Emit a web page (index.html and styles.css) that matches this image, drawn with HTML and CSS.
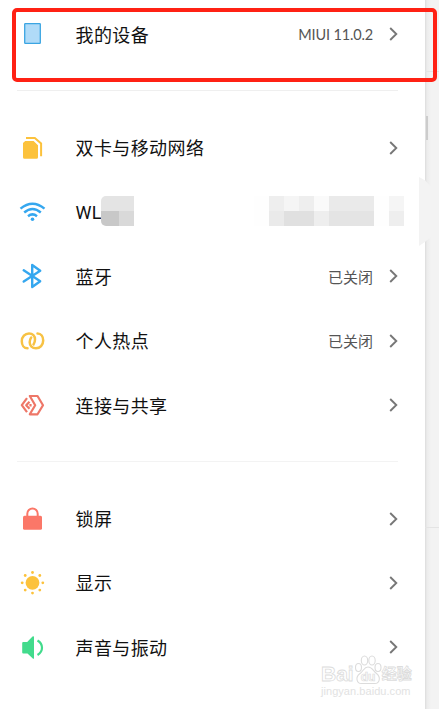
FILE: index.html
```
<!DOCTYPE html>
<html lang="zh-CN">
<head>
    <meta charset="UTF-8">
    <title>设置</title>
    <link rel="stylesheet" href="styles.css">
</head>

<body>

    <div class="screen">

        <div class="group">
            <div class="row">
                <svg class="icon" viewBox="0 0 30 30"><rect x="7.7" y="4.7" width="15.6" height="19.6" rx="0.6" fill="#b0dbf8" stroke="#3ba5e2" stroke-width="1.3"/></svg>
                <span class="label">我的设备</span>
                <span class="value version">MIUI 11.0.2</span>
                <svg class="arrow" viewBox="0 0 9 14"><path d="M1.2 1 7.3 7 1.2 13"/></svg>
            </div>
        </div>

        <div class="group">
            <div class="row">
                <svg class="icon" viewBox="0 0 30 30">
                    <path d="M8.2 8H16.6L21 12.200V24.200a1.500 1.500 0 0 1-1.500 1.500H7.500A1.500 1.500 0 0 1 6 24.200V10Z" fill="#fcc23c"/>
                    <path d="M9 4.900h8.800l6.300 5.500v12.800" fill="none" stroke="#fcc23c" stroke-width="2"/>
                </svg>
                <span class="label">双卡与移动网络</span>
                <svg class="arrow" viewBox="0 0 9 14"><path d="M1.2 1 7.3 7 1.2 13"/></svg>
            </div>
            <div class="row">
                <svg class="icon" viewBox="0 0 30 30" fill="none" stroke="#35a7ef" stroke-width="2.500">
                    <path d="M3.500 11.600Q15.500 1.800 27.500 11.600"/>
                    <path d="M7.200 15.500Q15.500 8.600 23.800 15.500"/>
                    <path d="M11 19.200Q15.500 15.600 20 19.200"/>
                    <circle cx="15.500" cy="22.300" r="1.800" fill="#35a7ef" stroke="none"/>
                </svg>
                <span class="label">WL</span>
                <div class="mosaic mosaic-name"><i class="c4"></i><i class="c4"></i><i class="c7"></i><i class="c6"></i></div>
                <div class="mosaic mosaic-value">
                    <i class="cw"></i><i class="c2"></i><i class="c1"></i><i class="c2"></i><i class="c0"></i><i class="c3"></i><i class="c3"></i><i class="c3"></i><i class="cw"></i><i class="c1"></i>
                    <i class="cw"></i><i class="c3"></i><i class="c5"></i><i class="c5"></i><i class="c2"></i><i class="c4"></i><i class="c4"></i><i class="c4"></i><i class="cw"></i><i class="c2"></i>
                </div>
            </div>
            <div class="row">
                <svg class="icon" viewBox="0 0 30 30"><path d="M6.700 9.300 23.200 20.200 15.200 26V4L23.200 9.700 6.700 20.500" fill="none" stroke="#35a7ef" stroke-width="2.400" stroke-linejoin="round" stroke-linecap="round"/></svg>
                <span class="label">蓝牙</span>
                <span class="value">已关闭</span>
                <svg class="arrow" viewBox="0 0 9 14"><path d="M1.2 1 7.3 7 1.2 13"/></svg>
            </div>
            <div class="row">
                <svg class="icon" viewBox="0 0 30 30" fill="none" stroke="#f7c244" stroke-width="2.500" stroke-linecap="round">
                    <path d="M10.500 22.300C7 22.300 4.800 19 4.800 15.200C4.800 10.800 8 7.500 12 7.500C15.800 7.500 18 10 18 13.500C18 15.500 17.500 17 16.500 18.500"/>
                    <path d="M20.500 7.500C24 7.500 26.200 10.800 26.200 14.600C26.200 19 23 22.300 19 22.300C15.200 22.300 12.700 19.800 12.700 16.300C12.700 14.300 13.300 12.800 14.200 11.600"/>
                </svg>
                <span class="label">个人热点</span>
                <span class="value">已关闭</span>
                <svg class="arrow" viewBox="0 0 9 14"><path d="M1.2 1 7.3 7 1.2 13"/></svg>
            </div>
            <div class="row">
                <svg class="icon" viewBox="0 0 30 30" fill="none" stroke="#ee7768" stroke-width="2.200" stroke-linejoin="round">
                    <path d="M12.800 6H20.500L26 15.200 20.500 24.300H12.800L18.200 15.200Z"/>
                    <path d="M10 8.200 4.800 15.200 10 22.200"/>
                    <path d="M12.500 11.700 9.200 15.200 12.500 18.700M13.500 14V16.400"/>
                </svg>
                <span class="label">连接与共享</span>
                <svg class="arrow" viewBox="0 0 9 14"><path d="M1.2 1 7.3 7 1.2 13"/></svg>
            </div>
        </div>

        <div class="group group-display">
            <div class="row">
                <svg class="icon" viewBox="0 0 30 30">
                    <path d="M10.300 13V9.700a5.200 5.200 0 0 1 10.400 0V13" fill="none" stroke="#fb7768" stroke-width="2"/>
                    <rect x="6" y="11.800" width="19" height="14" rx="1.500" fill="#fb7768"/>
                </svg>
                <span class="label">锁屏</span>
                <svg class="arrow" viewBox="0 0 9 14"><path d="M1.2 1 7.3 7 1.2 13"/></svg>
            </div>
            <div class="row">
                <svg class="icon" viewBox="0 0 30 30" fill="#fcc23c">
                    <circle cx="15.500" cy="14.800" r="6.900"/>
                    <circle cx="15.500" cy="4.500" r="1.400"/><circle cx="15.500" cy="25.100" r="1.400"/>
                    <circle cx="5.200" cy="14.800" r="1.400"/><circle cx="25.800" cy="14.800" r="1.400"/>
                    <circle cx="8.200" cy="7.500" r="1.400"/><circle cx="22.800" cy="7.500" r="1.400"/>
                    <circle cx="8.200" cy="22.100" r="1.400"/><circle cx="22.800" cy="22.100" r="1.400"/>
                </svg>
                <span class="label">显示</span>
                <svg class="arrow" viewBox="0 0 9 14"><path d="M1.2 1 7.3 7 1.2 13"/></svg>
            </div>
            <div class="row">
                <svg class="icon" viewBox="0 0 30 30">
                    <path d="M5.200 11a1 1 0 0 1 1-1h4L15.500 4.600Q17 3.600 17 5V26.200Q17 27.200 15.800 26.400L10.500 21.400h-4.300a1 1 0 0 1-1-1Z" fill="#42db8c"/>
                    <path d="M20.500 8.500C26.500 12 26.500 19.500 20.500 23" fill="none" stroke="#42db8c" stroke-width="2.200"/>
                </svg>
                <span class="label">声音与振动</span>
                <svg class="arrow" viewBox="0 0 9 14"><path d="M1.2 1 7.3 7 1.2 13"/></svg>
            </div>
        </div>

    </div>

    <div class="edge">
        <div class="edge-key"></div>
        <div class="edge-tab"></div>
    </div>

    <div class="highlight"></div>

    <div class="watermark">
        <div class="wm-brand">
            <span>Bai</span>
            <svg class="paw" viewBox="0 0 28 30" fill="#fff" stroke="#dcdcdc" stroke-width="1.100">
                <ellipse cx="4.500" cy="12.500" rx="3" ry="4"/>
                <ellipse cx="10.500" cy="5.500" rx="3.200" ry="4.500"/>
                <ellipse cx="18" cy="5.500" rx="3.200" ry="4.500"/>
                <ellipse cx="24" cy="12.500" rx="3" ry="4"/>
                <path d="M14 12C10 12 9.500 16 6 18.500C1 22 2.500 29 8 28.500H20C26 29 27 22 22.500 18.500C19 16 18.500 12 14 12Z"/>
                <text class="paw-text" x="14" y="26" text-anchor="middle">du</text>
            </svg>
            <span class="wm-cn">经验</span>
        </div>
        <div class="wm-url">jingyan.baidu.com</div>
    </div>

</body>
</html>
```
FILE: styles.css
```
body {
    font-family: "Liberation Sans", "Noto Sans CJK SC", sans-serif;
    background-color: #ffffff;
    margin: 0;
    height: 709px;
    display: flex;
    position: relative;
    overflow: hidden;
}

.screen {
    width: 425px;
    padding-top: 2px;
    box-sizing: border-box;
    flex: none;
}

.group + .group {
    margin-top: 24px;
}

.group + .group::before {
    content: "";
    display: block;
    height: 1px;
    margin: 0 27px 24px 17px;
    background: #efefef;
}

.group + .group-display::before {
    background: #f3f3f3;
}

.row {
    position: relative;
    display: flex;
    align-items: center;
    height: 64.4px;
    padding: 0 27px 0 17px;
}

.icon {
    width: 30px;
    height: 30px;
    margin-right: 28.5px;
}

.label {
    flex: 1;
    font-family: Roboto, "Noto Sans CJK SC", sans-serif;
    font-size: 18px;
    letter-spacing: 0.4px;
    line-height: 28px;
    padding-top: 3px;
    color: #111;
}

.value {
    font-size: 15px;
    color: #555;
    margin-right: 16px;
}

.version {
    font-family: Lato, sans-serif;
    font-size: 14.5px;
    letter-spacing: -0.15px;
}

.arrow {
    width: 9px;
    height: 14px;
    fill: none;
    stroke: #777;
    stroke-width: 1.9;
}

/* pixelated areas over the network name */
.mosaic {
    position: absolute;
    top: 16px;
    display: grid;
    grid-auto-rows: 15px;
}

.mosaic-name {
    left: 101px;
    grid-template-columns: 18px 15px;
    border-radius: 5px 0 0 5px;
    overflow: hidden;
}

.mosaic-value {
    left: 254px;
    grid-template-columns: repeat(10, 15px);
}

.cw { background: #fefefe; }
.c0 { background: #fafafa; }
.c1 { background: #f5f5f5; }
.c2 { background: #eeeeee; }
.c3 { background: #eaeaea; }
.c4 { background: #e4e4e4; }
.c5 { background: #e0e0e0; }
.c6 { background: #d9d9d9; }
.c7 { background: #c8c8c8; }

.edge {
    position: relative;
    flex: 1;
    background: linear-gradient(to right, #dcdcdc 0, #ececec 2px, #f3f3f3 6px);
}

.edge::before,
.edge::after {
    content: "";
    position: absolute;
    left: 0;
    right: 0;
    top: 71px;
    height: 1px;
    background: #e4e4e4;
}

.edge::after {
    top: 527px;
}

.edge-key {
    position: absolute;
    left: 1px;
    top: 116px;
    width: 2px;
    height: 24px;
    background: #cccccc;
}

.edge-tab {
    position: absolute;
    left: -6px;
    top: 177px;
    width: 14px;
    height: 69px;
    background: #f3f3f3;
    clip-path: polygon(0 0, 45% 5%, 100% 18%, 100% 84%, 45% 94%, 0 100%);
}

.highlight {
    position: absolute;
    left: 12px;
    top: 8px;
    width: 417px;
    height: 66px;
    border: 4px solid #ff2114;
    border-radius: 5px;
}

.watermark {
    position: absolute;
    left: 321px;
    top: 655px;
    color: #fff;
    -webkit-text-stroke: 0.8px #dcdcdc;
}

.wm-brand {
    display: flex;
    align-items: flex-end;
    height: 30px;
    font-size: 21px;
    font-weight: bold;
    line-height: 22px;
}

.paw {
    width: 28px;
    height: 30px;
}

.paw-text {
    font-size: 12px;
    stroke-width: 0.7px;
}

.wm-cn {
    font-size: 15px;
}

.wm-url {
    font-size: 11px;
    line-height: 13px;
    letter-spacing: 0.05px;
    color: #e2e2e2;
    -webkit-text-stroke: 0;
}
```
